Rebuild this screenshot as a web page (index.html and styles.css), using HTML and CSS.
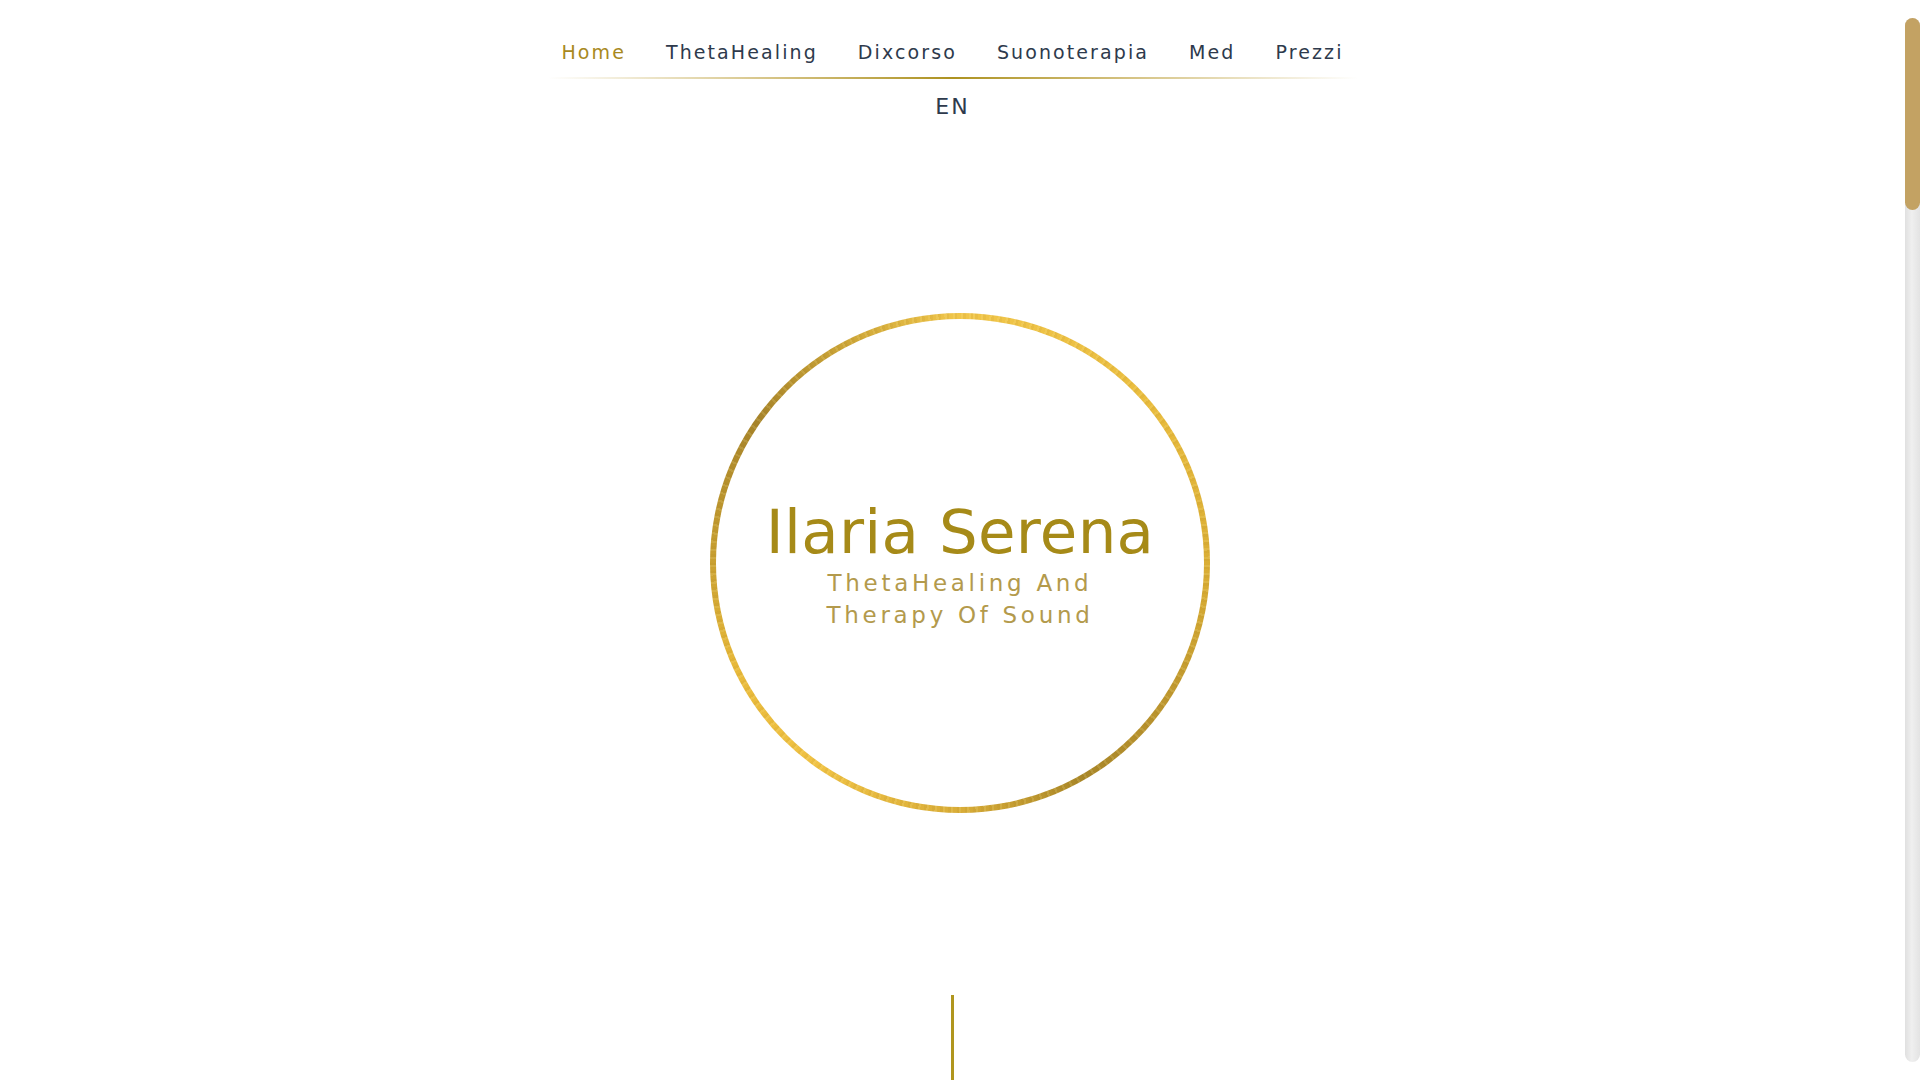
FILE: index.html
```html
<!DOCTYPE html>
<html lang="it">
<head>
<meta charset="utf-8">
<title>Ilaria Serena</title>
<link rel="stylesheet" href="styles.css">
</head>
<body>
<div class="site">
  <header class="site-header">
    <nav class="main-nav">
      <ul class="nav-list">
        <li><a class="nav-link active" href="#">Home</a></li>
        <li><a class="nav-link" href="#">ThetaHealing</a></li>
        <li><a class="nav-link" href="#">Dixcorso</a></li>
        <li><a class="nav-link" href="#">Suonoterapia</a></li>
        <li><a class="nav-link" href="#">Med</a></li>
        <li><a class="nav-link" href="#">Prezzi</a></li>
      </ul>
      <div class="nav-rule"></div>
    </nav>
    <div class="lang"><a class="lang-link" href="#">EN</a></div>
  </header>
  <main class="page">
    <section class="hero">
      <div class="ring">
        <div class="ring-inner">
          <h1 class="hero-title">Ilaria Serena</h1>
          <p class="hero-sub">ThetaHealing And<br>Therapy Of Sound</p>
        </div>
      </div>
    </section>
    <div class="scroll-line"></div>
  </main>
</div>
<div class="fake-scrollbar" aria-hidden="true">
  <div class="fake-track">
    <div class="fake-thumb"></div>
  </div>
</div>
</body>
</html>
```
FILE: styles.css
```css
html {
  background: #ffffff;
  overflow-x: hidden;
}
body {
  margin: 0;
  background: #ffffff;
  font-family: "DejaVu Sans", "Liberation Sans", sans-serif;
  color: #2e3a4c;
}
.site {
  width: calc(100% - 15px);
}
.site-header {
  display: flex;
  flex-direction: column;
  align-items: center;
  padding-top: 40px;
}
.main-nav {
  display: flex;
  flex-direction: column;
  align-items: center;
}
.nav-list {
  list-style: none;
  margin: 0;
  padding: 0 8px;
  display: flex;
  gap: 40px;
}
.nav-link {
  display: block;
  font-size: 19px;
  line-height: 24px;
  letter-spacing: 2.1px;
  color: #2e3a4c;
  text-decoration: none;
}
.nav-link.active {
  color: #a8891e;
}
.nav-rule {
  width: 810px;
  height: 2px;
  margin-top: 13px;
  background: linear-gradient(90deg, rgba(176, 149, 31, 0) 0%, rgba(196, 170, 80, 0.7) 28%, #ad9220 50%, rgba(196, 170, 80, 0.7) 72%, rgba(176, 149, 31, 0) 100%);
}
.lang {
  margin-top: 15px;
}
.lang-link {
  display: block;
  font-size: 22px;
  line-height: 26px;
  letter-spacing: 2px;
  color: #2e3a4c;
  text-decoration: none;
}
.page {
  min-height: 5750px;
  display: flex;
  flex-direction: column;
  align-items: center;
}
.hero {
  align-self: flex-start;
  width: 100vw;
  display: flex;
  justify-content: center;
  margin-top: 193px;
}
.ring {
  width: 500px;
  height: 500px;
  box-sizing: border-box;
  padding: 6px;
  border-radius: 50%;
  background:
    repeating-conic-gradient(from 3deg, rgba(255, 240, 170, 0.14) 0deg 0.5deg, rgba(150, 110, 20, 0.08) 0.5deg 1.1deg, rgba(255, 230, 140, 0) 1.1deg 1.9deg),
    conic-gradient(from 0deg,
      #f1c64a 0deg,
      #e9bc3e 50deg,
      #d8ac34 95deg,
      #b8922e 130deg,
      #a88628 150deg,
      #d9ad38 180deg,
      #f0c244 215deg,
      #e8b93a 245deg,
      #c49c30 275deg,
      #a6832a 305deg,
      #c9a236 330deg,
      #f1c64a 360deg);
}
.ring-inner {
  width: 100%;
  height: 100%;
  border-radius: 50%;
  background: #ffffff;
  display: flex;
  flex-direction: column;
  align-items: center;
  box-sizing: border-box;
  padding-top: 183px;
}
.hero-title {
  margin: 0;
  font-size: 61px;
  line-height: 60px;
  font-weight: normal;
  color: #a68a18;
  letter-spacing: 0.3px;
}
.hero-sub {
  margin: 5px 0 0;
  font-size: 23px;
  line-height: 32px;
  letter-spacing: 3.7px;
  text-align: center;
  color: #b39a4c;
}
.scroll-line {
  width: 3px;
  height: 300px;
  margin-top: 182px;
  background: #b0961e;
}
.fake-scrollbar {
  position: fixed;
  top: 0;
  right: 0;
  width: 15px;
  height: 100vh;
  box-sizing: border-box;
  padding: 18px 0;
  display: flex;
  flex-direction: column;
}
.fake-track {
  flex: 1;
  border-radius: 8px;
  background: linear-gradient(90deg, #e0e0e0 0%, #efefef 45%, #e3e3e3 100%);
}
.fake-thumb {
  height: 192px;
  border-radius: 8px;
  background: #c3a263;
}
```
